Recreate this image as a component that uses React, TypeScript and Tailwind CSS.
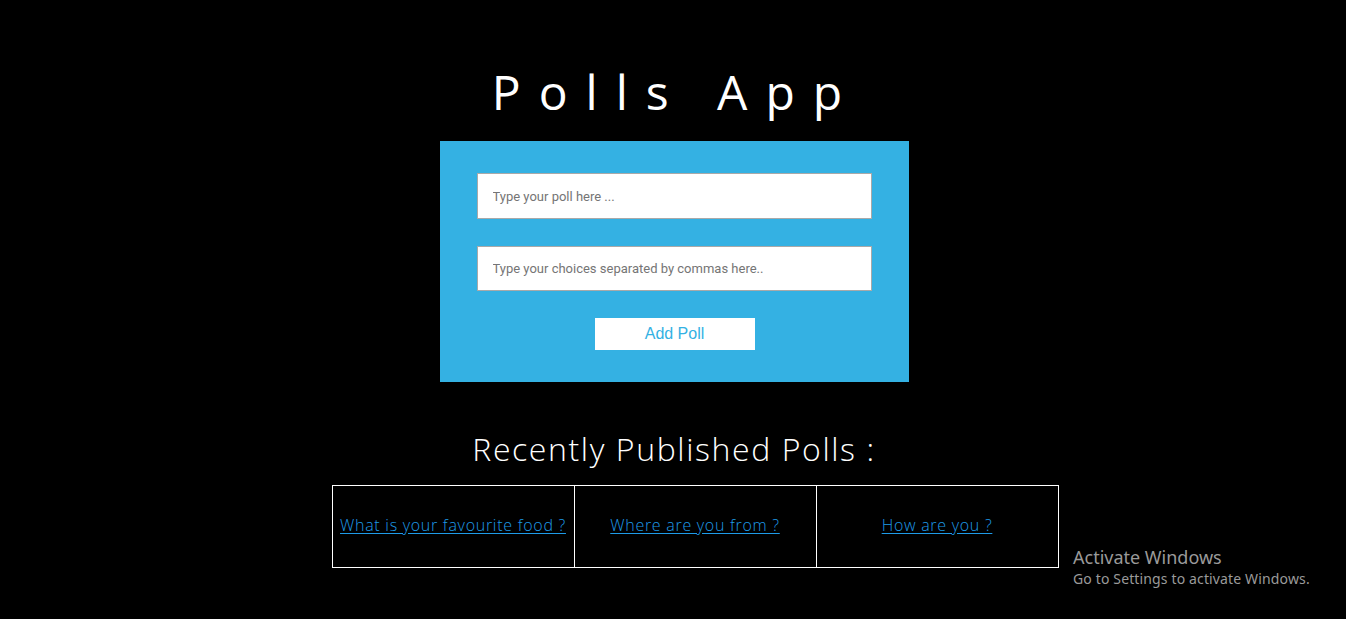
import React from "react";

export default function App() {
  const polls = ["What is your favourite food ?", "Where are you from ?", "How are you ?"];
  return (
    <div className="relative min-h-[619px] w-full bg-black flex flex-col items-center overflow-hidden" style={{ fontFamily: '"Open Sans", sans-serif' }}>
      <h1 className="mt-[62px] ml-[2px] h-[60px] text-[48px] leading-[60px] font-normal text-white tracking-[0.375em] pl-[4px]" style={{ fontFamily: '"Open Sans", sans-serif' }}>
        Polls App
      </h1>
      <div className="mt-[19px] ml-[2px] w-[469px] h-[241px] bg-[#34b1e3] flex flex-col items-center pt-[32px]">
        <input
          className="w-[395px] h-[46px] bg-white border border-[#a9a9a9] px-[15px] text-[13px] text-black placeholder:text-[#757575] outline-none"
          style={{ fontFamily: 'Roboto, "Liberation Sans", sans-serif' }}
          placeholder="Type your poll here ..."
        />
        <input
          className="mt-[27px] w-[395px] h-[45px] bg-white border border-[#a9a9a9] px-[15px] text-[13px] text-black placeholder:text-[#757575] outline-none"
          style={{ fontFamily: 'Roboto, "Liberation Sans", sans-serif' }}
          placeholder="Type your choices separated by commas here.."
        />
        <button
          className="mt-[27px] ml-[1px] w-[160px] h-[32px] bg-white text-[#34b1e3] text-[16px]"
          style={{ fontFamily: '"Liberation Sans", Arial, sans-serif' }}
        >
          Add Poll
        </button>
      </div>
      <h2 className="mt-[47px] ml-[2px] text-[32px] leading-[40px] font-light text-white tracking-[0.05em]">Recently Published Polls :</h2>
      <div className="mt-[16px] ml-[44px] grid grid-cols-[242px_242px_242px] border-l border-t border-white">
        {polls.map((p) => (
          <div key={p} className="h-[82px] pb-[4px] flex items-center justify-center border-r border-b border-white">
            <a href="#" className="text-[16px] font-light text-[#1e9be8] underline underline-offset-2 tracking-[0.045em]">
              {p}
            </a>
          </div>
        ))}
      </div>
      <div className="absolute left-[1073px] top-[545px] text-[#9a9a9a]" style={{ fontFamily: '"Noto Sans", "Open Sans", sans-serif' }}>
        <div className="text-[18px] leading-[24px]">Activate Windows</div>
        <div className="text-[14px] leading-[20px] tracking-[0.01em]">Go to Settings to activate Windows.</div>
      </div>
    </div>
  );
}
